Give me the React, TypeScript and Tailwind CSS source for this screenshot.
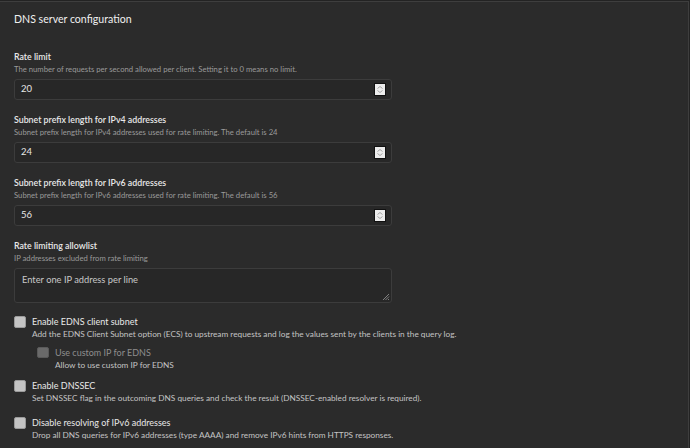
import React from "react";

const font = { fontFamily: "Lato, 'Noto Sans', sans-serif" };

function Spinner() {
    return (
        <div className="flex h-[13px] w-[12px] flex-col items-center justify-center gap-[1px] border border-[#111] bg-[#ececec]">
            <svg width="6" height="3" viewBox="0 0 6 3">
                <path d="M0.5 2.5 L3 0.5 L5.5 2.5" fill="none" stroke="#9a9a9a" strokeWidth="0.9" />
            </svg>
            <svg width="6" height="3" viewBox="0 0 6 3">
                <path d="M0.5 0.5 L3 2.5 L5.5 0.5" fill="none" stroke="#9a9a9a" strokeWidth="0.9" />
            </svg>
        </div>
    );
}

function NumberField({ label, desc, value, first }: { label: string; desc: string; value: string; first?: boolean }) {
    return (
        <div className={first ? "mt-[23px] flex flex-col" : "mt-[13px] flex flex-col"}>
            <div className="h-[13px] text-[8.8px] font-semibold leading-[13px] text-[#e8e8e8]">{label}</div>
            <div className="h-[12px] text-[7.7px] leading-[12px] text-[#9a9a9a]">{desc}</div>
            <div className="mt-[4px] flex h-[21px] w-[378px] items-center justify-between rounded-[3px] border border-[#3c3c3c] bg-[#272727] pl-[6px] pr-[5px]">
                <span className="text-[9.5px] text-[#e6e6e6]">{value}</span>
                <Spinner />
            </div>
        </div>
    );
}

function Check({ label, desc, disabled, className }: { label: string; desc: string; disabled?: boolean; className: string }) {
    return (
        <div className={className}>
            <div className="flex h-[13px] items-center gap-[6px]">
                <div
                    className={
                        disabled
                            ? "h-[11px] w-[12px] rounded-[2px] border border-[#5a5a5a] bg-[#6a6a6a]"
                            : "h-[12px] w-[12px] rounded-[2px] border border-[#9a9a9a] bg-[#c4c4c4]"
                    }
                />
                <span className={disabled ? "text-[9px] leading-[13px] text-[#8e8e8e]" : "text-[9px] leading-[13px] text-[#e8e8e8]"}>
                    {label}
                </span>
            </div>
            <div className="h-[12px] pl-[18px] text-[8.25px] leading-[12px] text-[#c4c4c4]">{desc}</div>
        </div>
    );
}

export default function App() {
    return (
        <div className="h-[448px] w-[690px] overflow-hidden bg-[#232323] pt-[1px]" style={font}>
            <div className="h-[447px] w-[689px] border-r border-t border-[#3e3e3e] bg-[#2b2b2b] pl-[14px]">
                <div className="mt-[9px] h-[16px] text-[10.6px] leading-[16px] text-[#f0f0f0]">DNS server configuration</div>

                <NumberField
                    first
                    label="Rate limit"
                    desc="The number of requests per second allowed per client. Setting it to 0 means no limit."
                    value="20"
                />
                <NumberField
                    label="Subnet prefix length for IPv4 addresses"
                    desc="Subnet prefix length for IPv4 addresses used for rate limiting. The default is 24"
                    value="24"
                />
                <NumberField
                    label="Subnet prefix length for IPv6 addresses"
                    desc="Subnet prefix length for IPv6 addresses used for rate limiting. The default is 56"
                    value="56"
                />

                <div className="mt-[13px] flex flex-col">
                    <div className="h-[13px] text-[8.8px] font-semibold leading-[13px] text-[#e8e8e8]">Rate limiting allowlist</div>
                    <div className="h-[12px] text-[7.7px] leading-[12px] text-[#9a9a9a]">IP addresses excluded from rate limiting</div>
                    <div className="relative mt-[4px] h-[35px] w-[378px] rounded-[3px] border border-[#3c3c3c] bg-[#272727] px-[7px] pt-[4px] text-[9.3px] leading-[13px] text-[#c8c8c8]">
                        Enter one IP address per line
                        <svg className="absolute bottom-[1px] right-[1px]" width="8" height="8" viewBox="0 0 8 8">
                            <path d="M7 1 L1 7 M7 3.5 L3.5 7 M7 6 L6 7" stroke="#8a8a8a" strokeWidth="0.9" />
                        </svg>
                    </div>
                </div>

                <Check
                    className="mt-[12px]"
                    label="Enable EDNS client subnet"
                    desc="Add the EDNS Client Subnet option (ECS) to upstream requests and log the values sent by the clients in the query log."
                />
                <Check
                    className="ml-[23px] mt-[6px]"
                    disabled
                    label="Use custom IP for EDNS"
                    desc="Allow to use custom IP for EDNS"
                />
                <Check
                    className="mt-[8px]"
                    label="Enable DNSSEC"
                    desc="Set DNSSEC flag in the outcoming DNS queries and check the result (DNSSEC-enabled resolver is required)."
                />
                <Check
                    className="mt-[12px]"
                    label="Disable resolving of IPv6 addresses"
                    desc="Drop all DNS queries for IPv6 addresses (type AAAA) and remove IPv6 hints from HTTPS responses."
                />
            </div>
        </div>
    );
}
